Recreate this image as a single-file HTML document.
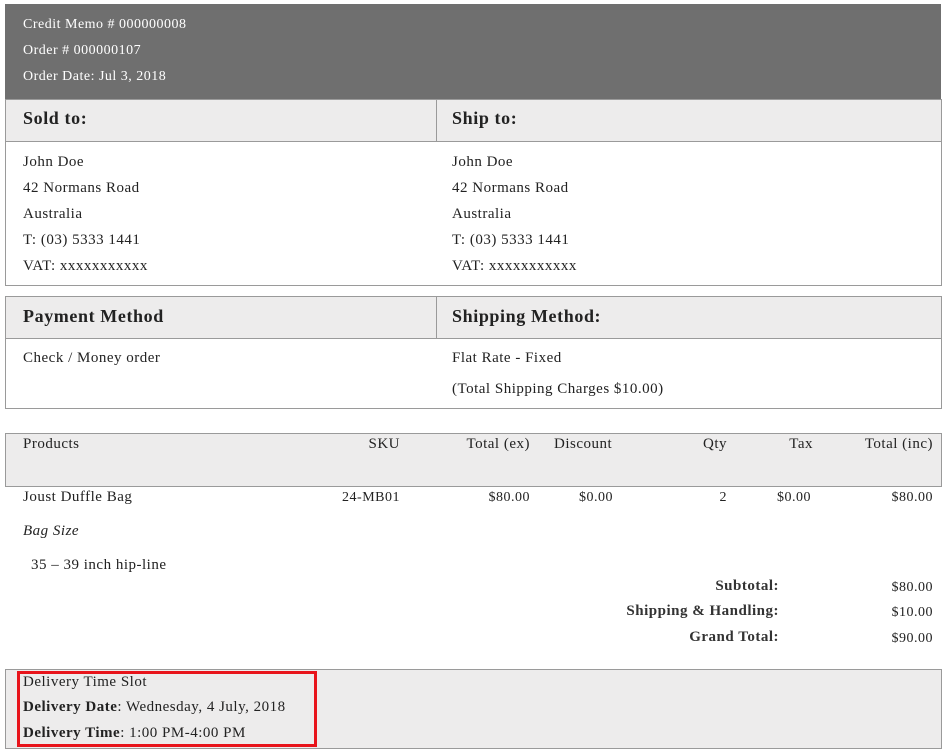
<!DOCTYPE html>
<html><head><meta charset="utf-8"><style>
*{margin:0;padding:0;box-sizing:border-box}
body{width:945px;height:756px;background:#fff;font-family:"Liberation Serif",serif;font-size:15px;letter-spacing:0.5px;color:#222;position:relative;overflow:hidden}
.a{position:absolute;white-space:nowrap}
.box{position:absolute;border:1px solid #9a9a9a}
.hd{position:absolute;background:#edecec;border-bottom:1px solid #9a9a9a}
.h{font-size:18px;font-weight:bold;color:#222;letter-spacing:0.6px}
.r{text-align:right}
</style></head><body>
<div class="a" style="left:5px;top:4px;width:936px;height:96px;background:#6f6f6f"></div>
<div class="a" style="left:23px;top:17px;color:#fff;font-size:14px">Credit Memo # 000000008</div>
<div class="a" style="left:23px;top:43px;color:#fff;font-size:14px">Order # 000000107</div>
<div class="a" style="left:23px;top:69px;color:#fff;font-size:14px">Order Date: Jul 3, 2018</div>

<div class="box" style="left:5px;top:99px;width:937px;height:187px"></div>
<div class="hd" style="left:6px;top:100px;width:935px;height:42px"></div>
<div class="a" style="left:436px;top:100px;width:1px;height:42px;background:#9a9a9a"></div>
<div class="a h" style="left:23px;top:108px">Sold to:</div>
<div class="a h" style="left:452px;top:108px">Ship to:</div>
<div class="a" style="left:23px;top:149px;line-height:26px">John Doe<br>42 Normans Road<br>Australia<br>T: (03) 5333 1441<br>VAT: xxxxxxxxxxx</div>
<div class="a" style="left:452px;top:149px;line-height:26px">John Doe<br>42 Normans Road<br>Australia<br>T: (03) 5333 1441<br>VAT: xxxxxxxxxxx</div>

<div class="box" style="left:5px;top:296px;width:937px;height:113px"></div>
<div class="hd" style="left:6px;top:297px;width:935px;height:42px"></div>
<div class="a" style="left:436px;top:297px;width:1px;height:42px;background:#9a9a9a"></div>
<div class="a h" style="left:23px;top:306px">Payment Method</div>
<div class="a h" style="left:452px;top:306px">Shipping Method:</div>
<div class="a" style="left:23px;top:350px">Check / Money order</div>
<div class="a" style="left:452px;top:350px">Flat Rate - Fixed</div>
<div class="a" style="left:452px;top:381px">(Total Shipping Charges $10.00)</div>

<div class="box" style="left:5px;top:433px;width:937px;height:54px;background:#edecec"></div>
<div class="a" style="left:23px;top:436px">Products</div>
<div class="a r" style="left:300px;width:100px;top:436px">SKU</div>
<div class="a r" style="left:430px;width:100px;top:436px">Total (ex)</div>
<div class="a" style="left:554px;top:436px">Discount</div>
<div class="a r" style="left:627px;width:100px;top:436px">Qty</div>
<div class="a r" style="left:713px;width:100px;top:436px">Tax</div>
<div class="a r" style="left:833px;width:100px;top:436px">Total (inc)</div>

<div class="a" style="left:23px;top:489px">Joust Duffle Bag</div>
<div class="a r" style="left:300px;width:100px;top:490px;font-size:14px">24-MB01</div>
<div class="a r" style="left:430px;width:100px;top:490px;font-size:14px">$80.00</div>
<div class="a" style="left:579px;top:490px;font-size:14px">$0.00</div>
<div class="a r" style="left:627px;width:100px;top:490px;font-size:14px">2</div>
<div class="a" style="left:777px;top:490px;font-size:14px">$0.00</div>
<div class="a r" style="left:833px;width:100px;top:490px;font-size:14px">$80.00</div>
<div class="a" style="left:23px;top:523px;font-style:italic">Bag Size</div>
<div class="a" style="left:31px;top:557px">35 – 39 inch hip-line</div>

<div class="a r" style="left:560px;width:219px;top:578px;font-weight:bold;color:#333">Subtotal:</div>
<div class="a r" style="left:560px;width:219px;top:603px;font-weight:bold;color:#333">Shipping &amp; Handling:</div>
<div class="a r" style="left:560px;width:219px;top:629px;font-weight:bold;color:#333">Grand Total:</div>
<div class="a r" style="left:833px;width:100px;top:580px;font-size:14px">$80.00</div>
<div class="a r" style="left:833px;width:100px;top:605px;font-size:14px">$10.00</div>
<div class="a r" style="left:833px;width:100px;top:631px;font-size:14px">$90.00</div>

<div class="box" style="left:5px;top:669px;width:937px;height:80px;background:#edecec"></div>
<div class="a" style="left:17px;top:671px;width:300px;height:76px;border:3px solid #e8141b"></div>
<div class="a" style="left:23px;top:674px">Delivery Time Slot</div>
<div class="a" style="left:23px;top:699px"><b>Delivery Date</b>: Wednesday, 4 July, 2018</div>
<div class="a" style="left:23px;top:725px"><b>Delivery Time</b>: 1:00 PM-4:00 PM</div>
</body></html>
